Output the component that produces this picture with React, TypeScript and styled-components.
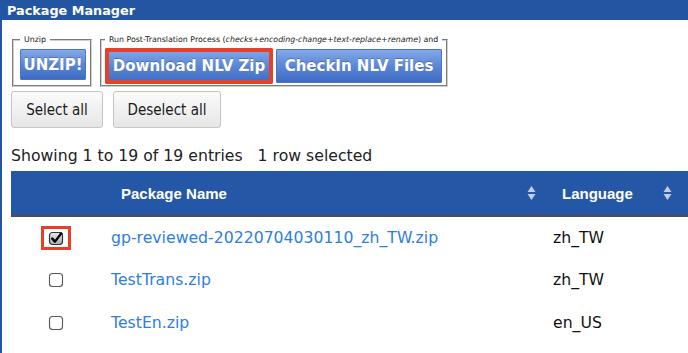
import React from "react";
import styled, { createGlobalStyle } from "styled-components";

const Global = createGlobalStyle`
  html, body { margin: 0; padding: 0; background: #fff; overflow: hidden; }
  body { font-family: "DejaVu Sans", Verdana, sans-serif; color: #111; }
`;

const BLUE = "#2355a3";

const Panel = styled.div`
  min-height: 100vh;
  border-left: 2px solid ${BLUE};
  box-sizing: border-box;
  width: 100%;
  overflow: hidden;
`;

const TitleBar = styled.div`
  height: 20px;
  box-sizing: border-box;
  padding: 2px 0 0 5px;
  line-height: 18px;
  background: ${BLUE};
  color: #fff;
  font-weight: bold;
  font-size: 12.8px;
  font-family: "DejaVu Sans", Verdana, sans-serif;
`;

const Content = styled.div`
  padding: 15px 0 0 9px;
`;

const ActionRow = styled.div`
  display: flex;
  gap: 8px;
  margin-left: 1px;
`;

const Group = styled.fieldset`
  margin: 0;
  padding: 3px 4px 1px ${(p: { $pl: number }) => p.$pl}px;
  border: 2px groove #cfcfcf;
  display: flex;
  align-items: center;
  gap: 3px;
  min-width: 0;
`;

const Legend = styled.legend`
  padding: 0 4px;
  font-size: 7.85px;
  line-height: 10px;
  color: #222;
  white-space: nowrap;
  font-family: "DejaVu Sans", Verdana, sans-serif;
  i { font-style: italic; }
`;

const BlueButton = styled.button<{ $w: number; $h: number; $mark?: boolean; $top?: boolean }>`
  width: ${(p) => p.$w}px;
  height: ${(p) => p.$h}px;
  align-self: ${(p) => (p.$top ? "flex-start" : "center")};
  margin-top: ${(p) => (p.$top ? 1 : 0)}px;
  padding: 0;
  border: 1px solid ${(p) => (p.$mark ? "#e5402a" : "#4b75c4")};
  border-radius: 1px;
  background: linear-gradient(#84a8e8, #5b87d6 50%, #3e6bc3);
  color: #fff;
  font-family: "DejaVu Sans", Verdana, sans-serif;
  font-weight: bold;
  font-size: 15px;
  white-space: nowrap;
  text-shadow: 0 -1px 0 rgba(0, 0, 0, 0.25);
  box-shadow: ${(p) => (p.$mark ? "inset 0 0 0 3px #e5402a" : "none")};
`;

const SelectRow = styled.div`
  display: flex;
  gap: 10px;
  margin-top: 4px;
`;

const GreyButton = styled.button<{ $w: number }>`
  width: ${(p) => p.$w}px;
  height: 37px;
  padding: 0;
  border: 1px solid #c4c4c4;
  border-radius: 3px;
  background: linear-gradient(#fbfbfb, #e6e6e6);
  color: #1a1a1a;
  font-family: "DejaVu Sans Condensed", "DejaVu Sans", sans-serif;
  font-size: 15px;
`;

const Info = styled.div`
  margin-top: 18px;
  font-size: 15.7px;
  line-height: 20px;
  color: #222;
  white-space: pre;
`;

const Table = styled.table`
  margin-top: 5px;
  border-collapse: collapse;
  table-layout: fixed;
  width: 100%;
`;

const HeadCell = styled.th<{ $pl: number; $pr: number }>`
  height: 44px;
  padding: 0 ${(p) => p.$pr}px 0 ${(p) => p.$pl}px;
  background: #2457a5;
  border-bottom: 2px solid #4d4d4d;
  color: #fff;
  font-family: "Liberation Sans", Arial, sans-serif;
  font-weight: bold;
  font-size: 15px;
  text-align: left;
`;

const HeadInner = styled.div`
  display: flex;
  align-items: center;
  justify-content: space-between;
`;

const Cell = styled.td<{ $pl?: number; $h?: number }>`
  height: ${(p) => p.$h ?? 43}px;
  padding: 0 0 0 ${(p) => p.$pl ?? 0}px;
  font-size: 15.7px;
  color: #111;
  vertical-align: middle;
  white-space: nowrap;
  overflow: hidden;
`;

const CheckCell = styled.td<{ $h?: number }>`
  height: ${(p) => p.$h ?? 43}px;
  padding: 0;
  vertical-align: middle;
  text-align: center;
`;

const Frame = styled.span<{ $on: boolean }>`
  display: inline-flex;
  align-items: center;
  justify-content: center;
  width: 30px;
  height: 24px;
  box-sizing: border-box;
  border: 3px solid ${(p) => (p.$on ? "#e5402a" : "transparent")};
  vertical-align: middle;
`;

const Link = styled.a`
  color: #2e7de0;
  text-decoration: none;
`;

const SortIcon = () => (
  <svg width="9" height="16" viewBox="0 0 9 16">
    <path d="M4.5 1 L8.5 7 L0.5 7 Z" fill="#c3cde0" />
    <path d="M4.5 15 L8.5 9 L0.5 9 Z" fill="#c3cde0" />
  </svg>
);

const Box = ({ checked }: { checked: boolean }) =>
  checked ? (
    <svg width="16" height="16" viewBox="0 0 16 16">
      <defs>
        <linearGradient id="cg" x1="0" y1="0" x2="0" y2="1">
          <stop offset="0" stopColor="#e8e8ee" />
          <stop offset="1" stopColor="#a9adb8" />
        </linearGradient>
      </defs>
      <rect x="1.5" y="2.5" width="13" height="12" rx="3" fill="url(#cg)" stroke="#333" strokeWidth="1.2" />
      <path d="M4.2 8.6 L7 11.6 L13.2 3.4" fill="none" stroke="#000" strokeWidth="2.4" strokeLinecap="round" strokeLinejoin="round" />
    </svg>
  ) : (
    <svg width="16" height="16" viewBox="0 0 16 16">
      <rect x="1.5" y="1.5" width="13" height="13" rx="3" fill="#fff" stroke="#555" strokeWidth="1.1" />
    </svg>
  );

const rows = [
  { name: "gp-reviewed-20220704030110_zh_TW.zip", lang: "zh_TW", sel: true, h: 41 },
  { name: "TestTrans.zip", lang: "zh_TW", sel: false, h: 43 },
  { name: "TestEn.zip", lang: "en_US", sel: false, h: 43 },
];

export default function App() {
  return (
    <>
      <Global />
      <Panel>
        <TitleBar>Package Manager</TitleBar>
        <Content>
          <ActionRow>
            <Group $pl={6}>
              <Legend>Unzip</Legend>
              <BlueButton $w={66} $h={31} $top>
                UNZIP!
              </BlueButton>
            </Group>
            <Group $pl={3}>
              <Legend>
                Run Post-Translation Process (<i>checks+encoding-change+text-replace+rename</i>) and
              </Legend>
              <BlueButton $w={168} $h={36} $mark>
                Download NLV Zip
              </BlueButton>
              <BlueButton $w={166} $h={34}>
                CheckIn NLV Files
              </BlueButton>
            </Group>
          </ActionRow>
          <SelectRow>
            <GreyButton $w={92}>Select all</GreyButton>
            <GreyButton $w={108}>Deselect all</GreyButton>
          </SelectRow>
          <Info>{"Showing 1 to 19 of 19 entries   1 row selected"}</Info>
          <Table>
            <colgroup>
              <col style={{ width: 90 }} />
              <col style={{ width: 442 }} />
              <col style={{ width: 137 }} />
              <col />
            </colgroup>
            <thead>
              <tr>
                <HeadCell $pl={0} $pr={0} />
                <HeadCell $pl={20} $pr={7}>
                  <HeadInner>
                    <span>Package Name</span>
                    <SortIcon />
                  </HeadInner>
                </HeadCell>
                <HeadCell $pl={19} $pr={8}>
                  <HeadInner>
                    <span>Language</span>
                    <SortIcon />
                  </HeadInner>
                </HeadCell>
                <HeadCell $pl={0} $pr={0} />
              </tr>
            </thead>
            <tbody>
              {rows.map((r) => (
                <tr key={r.name}>
                  <CheckCell $h={r.h}>
                    <Frame $on={r.sel}>
                      <Box checked={r.sel} />
                    </Frame>
                  </CheckCell>
                  <Cell $pl={10} $h={r.h}>
                    <Link href="#">{r.name}</Link>
                  </Cell>
                  <Cell $pl={10} $h={r.h}>{r.lang}</Cell>
                  <Cell $h={r.h} />
                </tr>
              ))}
            </tbody>
          </Table>
        </Content>
      </Panel>
    </>
  );
}
